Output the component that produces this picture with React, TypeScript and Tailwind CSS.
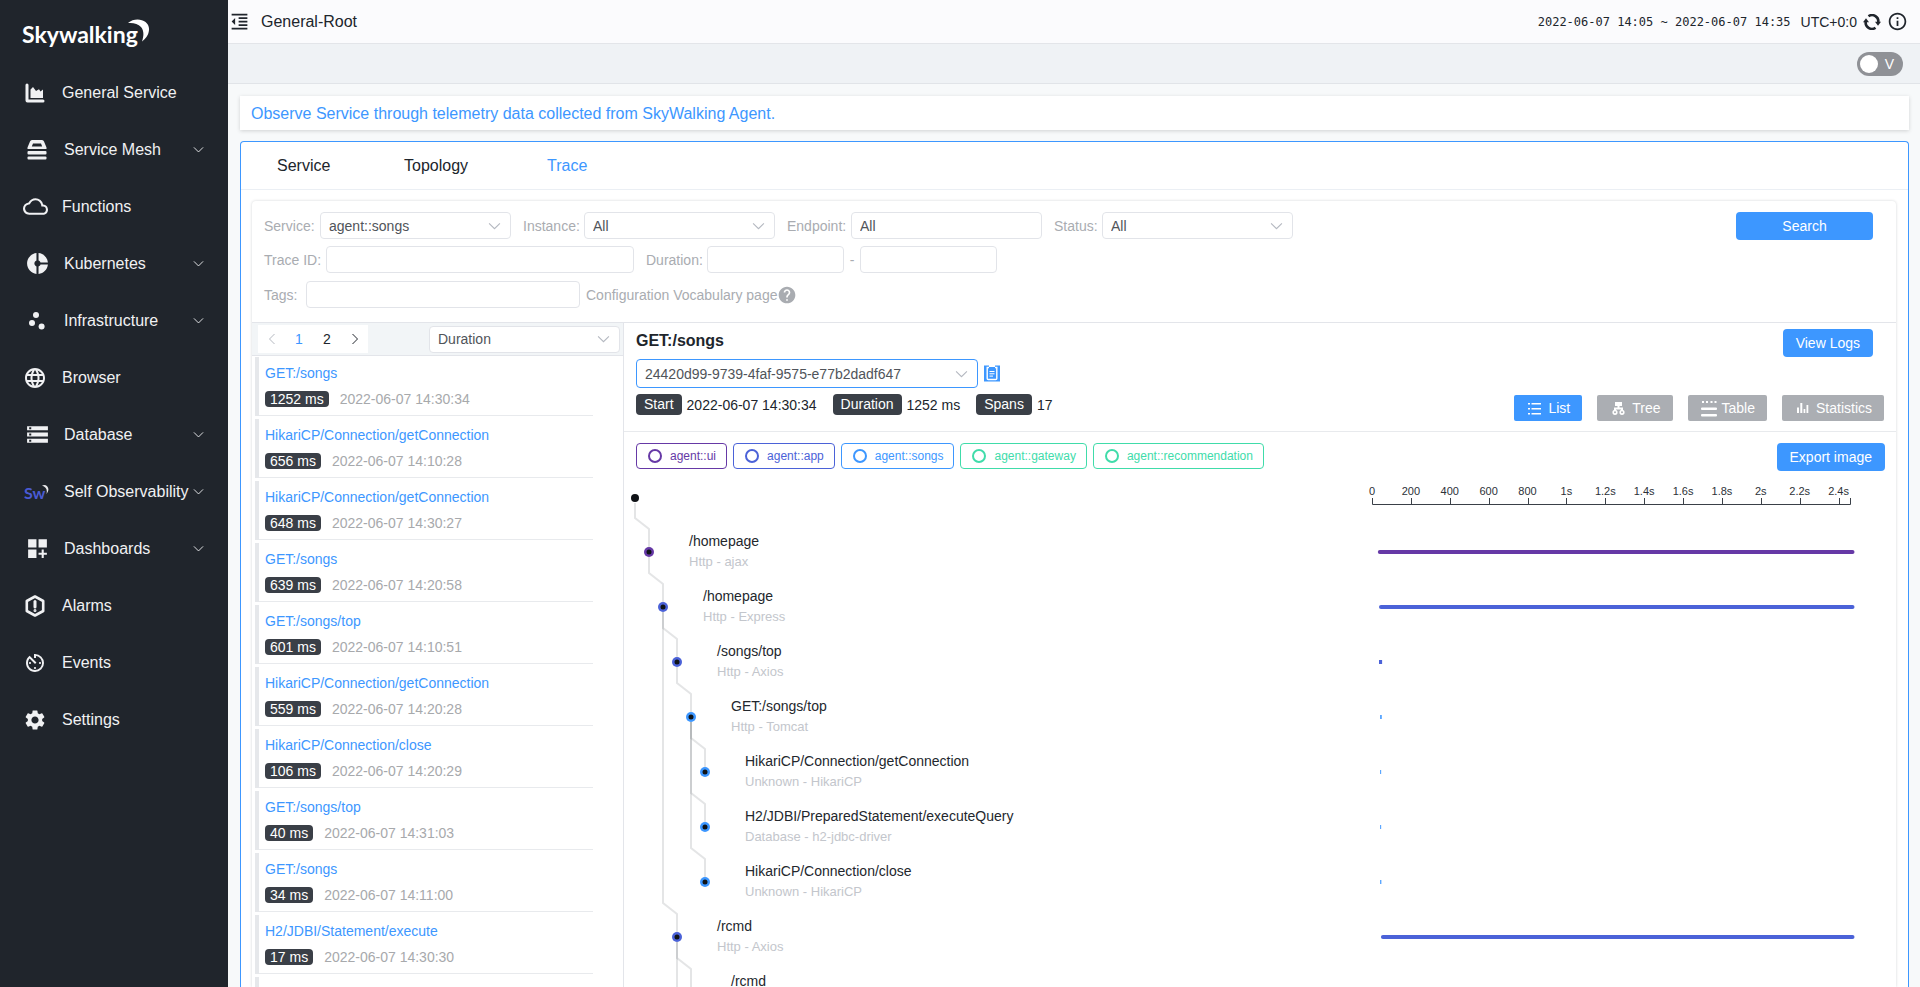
import React, { useState } from "react";
import clsx from "clsx";
import {
  MdAvTimer,
  MdDashboardCustomize,
  MdDonutSmall,
  MdFormatIndentDecrease,
  MdHelp,
  MdInfoOutline,
  MdLanguage,
  MdOutlineCloud,
  MdScatterPlot,
  MdSettings,
  MdStorage,
} from "react-icons/md";

type MenuItem = {
  label: string;
  icon: React.ReactNode;
  hasChildren?: boolean;
};

type Trace = { name: string; duration: number; start: string };

type Span = {
  name?: string;
  layer?: string;
  level: number;
  parent: number;
  color: string;
  from: number;
  to: number;
};

const PURPLE = "#6639a6";
const INDIGO = "#4b62d8";
const BLUE = "#3d97ff";
const GREEN = "#40dcaa";

const Chevron = ({ className }: { className?: string }) => (
  <svg viewBox="0 0 12 8" fill="none" stroke="currentColor" className={className}>
    <path d="M1 1.5 6 6.5 11 1.5" />
  </svg>
);

const ChartIcon = () => (
  <svg viewBox="0 0 20 20" width="20" height="20" fill="currentColor">
    <path d="M0.5 2a1.5 1.5 0 0 1 3 0v14.500H18a1.500 1.500 0 0 1 0 3H2.500a2 2 0 0 1-2-2z" />
    <path d="M5.500 15V6.500l2.500-2.500 3 4 3-1.800 1.500 2.300 2.500-2V15z" />
  </svg>
);

const MeshIcon = () => (
  <svg viewBox="0 0 20 20" width="20" height="20" fill="currentColor">
    <path
      fillRule="evenodd"
      d="M5 0h10q1.500 0 2 1.500l2.500 6V9H.5V7.500l2.500-6Q3.500 0 5 0zM6 3.500 4.800 6.500h10.400L14 3.500z"
    />
    <rect x="0.5" y="11" width="19" height="3.5" rx="1" />
    <rect x="0.5" y="16.5" width="19" height="3" rx="1" />
  </svg>
);

const AlarmIcon = () => (
  <svg viewBox="0 0 20 22" width="20" height="22" fill="none" stroke="currentColor">
    <path d="M10 1.5 18.2 6v10L10 20.5 1.8 16V6z" strokeWidth="2.6" strokeLinejoin="round" />
    <path d="M10 6.500v5.500" strokeWidth="3" strokeLinecap="round" />
    <circle cx="10" cy="15.600" r="0.600" strokeWidth="1.800" />
  </svg>
);

const SwIcon = () => (
  <svg viewBox="0 0 26 18" width="26" height="18">
    <text x="0" y="16" fontSize="16" fontFamily="Lato, sans-serif" fontWeight="700" fill="#4a5bd4">
      Sw
    </text>
    <path d="M18 2.600c4-2.600 9.400 2.600 4.400 8.400 1.400-4.200-.6-7.200-4.400-8.400z" fill="#e8e8ea" />
  </svg>
);

const ReloadIcon = () => (
  <svg viewBox="0 0 18 16" width="18" height="16" fill="none" stroke="currentColor">
    <path d="M5.500 2.300A6.200 6.200 0 0 1 15.200 8.500" strokeWidth="2.600" />
    <path d="M12.500 13.700A6.200 6.200 0 0 1 2.800 7.500" strokeWidth="2.600" />
    <path d="M12 7.800h6l-3 4zM0 8.200h6l-3-4z" fill="currentColor" stroke="none" />
  </svg>
);

const CopyIcon = () => (
  <svg viewBox="0 0 16 17" width="16" height="17">
    <rect y="0.500" width="16" height="16" fill={BLUE} />
    <path
      d="M5 2.500H3.200v11q0 1 1 1h7.600q1 0 1-1v-11H11"
      stroke="#fff"
      strokeWidth="1.400"
      fill="none"
    />
    <rect x="5" y="0" width="6" height="2" fill="#fff" />
    <path d="M5.500 6.500h5M5.500 8.800h5M5.500 11.100h3.500" stroke="#fff" />
  </svg>
);

const ListIcon = () => (
  <svg viewBox="0 0 13 13" width="13" height="13" fill="currentColor">
    <path d="M0 1h2v1.500H0zM3.500 1H13v1.500H3.500zM0 6h2v1.500H0zM3.500 6H13v1.500H3.500zM0 11h2v1.500H0zM3.500 11H13v1.500H3.500z" />
  </svg>
);

const TreeIcon = () => (
  <svg viewBox="0 0 13 13" width="13" height="13" fill="none" stroke="currentColor" strokeWidth="1.600">
    <path d="M3 2h7" strokeWidth="4" />
    <path d="M6.500 2v4M3 9V6.500h7V9" strokeWidth="2" />
    <circle cx="3" cy="10.300" r="1.800" />
    <circle cx="10" cy="10.300" r="1.800" />
  </svg>
);

const TableIcon = () => (
  <svg viewBox="0 0 16 17" width="16" height="17" fill="currentColor">
    <path d="M1 1h2v2H1zM5 1h2v2H5zM9.500 1h2v2h-2zM13.500 1h2v2h-2z" />
    <rect y="7.500" width="16" height="2.500" rx="1" />
    <rect y="14" width="16" height="2.500" rx="1" />
  </svg>
);

const StatisticsIcon = () => (
  <svg viewBox="0 0 12 12" width="12" height="12" fill="currentColor">
    <path d="M0 5.500h2V11H0zM3.300 1h2v10h-2zM6.600 7h1.700v4H6.600zM9.500 3h1.800v8H9.500z" />
  </svg>
);

const menus: MenuItem[] = [
  { label: "General Service", icon: <ChartIcon /> },
  { label: "Service Mesh", icon: <MeshIcon />, hasChildren: true },
  { label: "Functions", icon: <MdOutlineCloud size={25} /> },
  { label: "Kubernetes", icon: <MdDonutSmall size={25} />, hasChildren: true },
  { label: "Infrastructure", icon: <MdScatterPlot size={24} />, hasChildren: true },
  { label: "Browser", icon: <MdLanguage size={24} /> },
  { label: "Database", icon: <MdStorage size={25} />, hasChildren: true },
  { label: "Self Observability", icon: <SwIcon />, hasChildren: true },
  { label: "Dashboards", icon: <MdDashboardCustomize size={25} />, hasChildren: true },
  { label: "Alarms", icon: <AlarmIcon /> },
  { label: "Events", icon: <MdAvTimer size={24} /> },
  { label: "Settings", icon: <MdSettings size={24} /> },
];

const traces: Trace[] = [
  { name: "GET:/songs", duration: 1252, start: "2022-06-07 14:30:34" },
  { name: "HikariCP/Connection/getConnection", duration: 656, start: "2022-06-07 14:10:28" },
  { name: "HikariCP/Connection/getConnection", duration: 648, start: "2022-06-07 14:30:27" },
  { name: "GET:/songs", duration: 639, start: "2022-06-07 14:20:58" },
  { name: "GET:/songs/top", duration: 601, start: "2022-06-07 14:10:51" },
  { name: "HikariCP/Connection/getConnection", duration: 559, start: "2022-06-07 14:20:28" },
  { name: "HikariCP/Connection/close", duration: 106, start: "2022-06-07 14:20:29" },
  { name: "GET:/songs/top", duration: 40, start: "2022-06-07 14:31:03" },
  { name: "GET:/songs", duration: 34, start: "2022-06-07 14:11:00" },
  { name: "H2/JDBI/Statement/execute", duration: 17, start: "2022-06-07 14:30:30" },
];

const spans: Span[] = [
  { name: "/homepage", layer: "Http - ajax", level: 1, parent: -1, color: PURPLE, from: 30, to: 2482 },
  { name: "/homepage", layer: "Http - Express", level: 2, parent: 0, color: INDIGO, from: 36, to: 2482 },
  { name: "/songs/top", layer: "Http - Axios", level: 3, parent: 1, color: INDIGO, from: 36, to: 52 },
  { name: "GET:/songs/top", layer: "Http - Tomcat", level: 4, parent: 2, color: BLUE, from: 42, to: 50 },
  { name: "HikariCP/Connection/getConnection", layer: "Unknown - HikariCP", level: 5, parent: 3, color: BLUE, from: 42, to: 47 },
  { name: "H2/JDBI/PreparedStatement/executeQuery", layer: "Database - h2-jdbc-driver", level: 5, parent: 3, color: BLUE, from: 42, to: 47 },
  { name: "HikariCP/Connection/close", layer: "Unknown - HikariCP", level: 5, parent: 3, color: BLUE, from: 42, to: 48 },
  { name: "/rcmd", layer: "Http - Axios", level: 3, parent: 1, color: INDIGO, from: 46, to: 2482 },
  { name: "/rcmd", level: 4, parent: 7, color: GREEN, from: 50, to: 2482 },
  { level: 4, parent: 7, color: GREEN, from: 52, to: 2482 },
];

const services = [
  { name: "agent::ui", style: "border-[#6639a6] text-[#6639a6]" },
  { name: "agent::app", style: "border-[#4b62d8] text-[#4b62d8]" },
  { name: "agent::songs", style: "border-[#3d97ff] text-[#3d97ff]" },
  { name: "agent::gateway", style: "border-[#40dcaa] text-[#40dcaa]" },
  { name: "agent::recommendation", style: "border-[#40dcaa] text-[#40dcaa]" },
];

const views = [
  { name: "List", icon: <ListIcon />, style: "gap-[7px] pl-[14px]" },
  { name: "Tree", icon: <TreeIcon />, style: "gap-[7px] pl-[15px]" },
  { name: "Table", icon: <TableIcon />, style: "gap-[5px] pl-[13px]" },
  { name: "Statistics", icon: <StatisticsIcon />, style: "gap-[7px] pl-[15px]" },
];

const Logo = () => (
  <svg viewBox="0 0 130 34" width="130" height="34" role="img" aria-label="Skywalking">
    <text x="0" y="26" fontSize="23" fontWeight="700" fontFamily="Lato, sans-serif" fill="#fff">
      Skywalking
    </text>
    <path d="M106 6C114-1 128 3 127 13c-.5 6-4 9-7 11.500 2-6 2-11-1-14.500C116 6.500 111 5.500 106 6z" fill="#fff" />
  </svg>
);

const Sidebar = () => (
  <aside className="flex w-[228px] shrink-0 flex-col bg-[#20252c] text-[#f0f1f3]">
    <div className="flex h-16 shrink-0 items-center pt-[3px] pl-[22px]">
      <Logo />
    </div>
    <nav>
      {menus.map((menu) => (
        <a
          key={menu.label}
          href="#"
          className={clsx(
            "flex h-[57px] items-center pr-6 whitespace-nowrap",
            menu.hasChildren ? "pl-6" : "pl-[22px]",
          )}
        >
          <span className="mr-[14px] flex w-[26px] shrink-0 justify-center">{menu.icon}</span>
          <span className="flex-1">{menu.label}</span>
          {menu.hasChildren && <Chevron className="w-[11px]" />}
        </a>
      ))}
    </nav>
  </aside>
);

const Header = () => (
  <header className="flex h-11 shrink-0 items-center justify-between border-b border-[#e3e5e9] bg-[#fbfbfd] pr-3 pl-[1px]">
    <div className="flex items-center gap-[11px]">
      <button aria-label="Collapse menu">
        <MdFormatIndentDecrease size={21} />
      </button>
      <h1>General-Root</h1>
    </div>
    <div className="flex items-center text-sm">
      <time className="mr-[10px] font-['DejaVu_Sans_Mono',monospace] text-xs">
        2022-06-07 14:05 ~ 2022-06-07 14:35
      </time>
      <span className="mr-[6px]">UTC+0:0</span>
      <button aria-label="Reload" className="mr-[6px]">
        <ReloadIcon />
      </button>
      <button aria-label="Info">
        <MdInfoOutline size={21} />
      </button>
    </div>
  </header>
);

const Select = ({
  id,
  options,
  className,
}: {
  id: string;
  options: string[];
  className?: string;
}) => (
  <div
    className={clsx(
      "relative rounded border bg-white text-[#50545a]",
      className,
    )}
  >
    <select id={id} aria-label={id} className="h-full w-full appearance-none pr-8 pl-2 outline-none">
      {options.map((option) => (
        <option key={option}>{option}</option>
      ))}
    </select>
    <Chevron className="pointer-events-none absolute top-1/2 right-[9px] w-[13px] -translate-y-1/2 text-[#b4b8c0]" />
  </div>
);

const inputStyle = "h-[27px] rounded border border-[#e2e4e9] bg-white px-2 text-[#50545a] outline-none";
const selectStyle = "h-[27px] w-[191px] border-[#e2e4e9]";

const Filters = () => (
  <form className="flex justify-between border-b border-[#e3e5ea] pt-[11px] pr-[23px] pb-[14px] pl-3 text-sm text-[#a9acb1]">
    <div>
      <div className="flex items-center">
        <label htmlFor="service" className="w-[56px]">Service:</label>
        <Select id="service" options={["agent::songs"]} className={selectStyle} />
        <label htmlFor="instance" className="ml-3 w-[61px]">Instance:</label>
        <Select id="instance" options={["All"]} className={selectStyle} />
        <label htmlFor="endpoint" className="ml-3 w-[64px]">Endpoint:</label>
        <input id="endpoint" defaultValue="All" className={clsx(inputStyle, "w-[191px]")} />
        <label htmlFor="status" className="ml-3 w-[48px]">Status:</label>
        <Select id="status" options={["All"]} className={selectStyle} />
      </div>
      <div className="mt-[7px] flex items-center">
        <label htmlFor="trace-id" className="w-[62px]">Trace ID:</label>
        <input id="trace-id" className={clsx(inputStyle, "w-[308px]")} />
        <label htmlFor="min-duration" className="ml-3 w-[61px]">Duration:</label>
        <input id="min-duration" className={clsx(inputStyle, "w-[137px]")} />
        <span className="w-4 text-center">-</span>
        <input aria-label="Max duration" className={clsx(inputStyle, "w-[137px]")} />
      </div>
      <div className="mt-2 flex items-center">
        <label htmlFor="tags" className="w-[42px]">Tags:</label>
        <input id="tags" className={clsx(inputStyle, "w-[274px]")} />
        <a href="#" className="ml-[6px] flex items-center">
          Configuration Vocabulary page
          <MdHelp size={20} />
        </a>
      </div>
    </div>
    <button type="button" className="h-7 w-[137px] rounded bg-[#3d97ff] text-white">
      Search
    </button>
  </form>
);

const TraceList = () => (
  <section className="w-[371px] shrink-0 text-sm">
    <div className="flex h-[33px] items-center justify-between border-b border-[#e3e5ea] bg-[#f2f5f7] pr-[3px] pl-[6px]">
      <div className="flex h-7 items-center bg-white font-medium">
        <button aria-label="Previous page" className="flex w-[27px] justify-center text-[#b4b8c0]">
          <Chevron className="w-3 rotate-90" />
        </button>
        <button className="w-[28px] text-[#3d97ff]">1</button>
        <button className="w-[28px]">2</button>
        <button aria-label="Next page" className="flex w-[27px] justify-center">
          <Chevron className="w-3 -rotate-90" />
        </button>
      </div>
      <Select id="order" options={["Duration"]} className={selectStyle} />
    </div>
    <ul className="pt-px pl-[3px]">
      {traces.map((trace, index) => (
        <li key={index} className="mb-[3px] flex h-[59px] w-[338px]">
          <span className="w-1 shrink-0 bg-[#e6e8eb]" />
          <div className="flex-1 border-b border-[#e8eaed] pt-[6px] pl-[6px]">
            <a href="#" className="block text-[#3d97ff]">{trace.name}</a>
            <div className="mt-2 flex items-center gap-[11px] leading-4">
              <span className="rounded bg-[#3a3f47] px-[5px] text-white">{trace.duration} ms</span>
              <span className="text-[#a7a9ac]">{trace.start}</span>
            </div>
          </div>
        </li>
      ))}
      <li className="flex h-[59px] w-[338px]">
        <span className="w-1 shrink-0 bg-[#e6e8eb]" />
      </li>
    </ul>
  </section>
);

const Tag = ({ label, value }: { label: string; value: string }) => (
  <div className="flex items-center gap-[5px]">
    <span className="rounded bg-[#3a3f47] px-2 leading-[21px] text-white">{label}</span>
    <span>{value}</span>
  </div>
);

const nodeX = (level: number) => 11 + level * 14;
const nodeY = (index: number) => 81 + index * 55;

const SpanTree = () => (
  <svg className="h-[516px] min-w-0 flex-1" fontFamily="Liberation Sans, Arial, sans-serif">
    {spans.map((span, index) => {
      const x = nodeX(span.level);
      const y = nodeY(index);
      const parentX = nodeX(span.level - 1);
      const parentY = span.parent < 0 ? 27 : nodeY(span.parent);
      return (
        <path
          key={index}
          d={`M${parentX} ${parentY + 5}V${y - 34}L${x} ${y - 23}V${y - 5}`}
          fill="none"
          stroke="#202830"
          strokeOpacity="0.12"
          strokeWidth="2"
        />
      );
    })}
    <circle cx={nodeX(0)} cy="27" r="4" fill="#0f1216" />
    {spans.map((span, index) => {
      const x = nodeX(span.level);
      const y = nodeY(index);
      return (
        <g key={index}>
          <circle cx={x} cy={y} r="5" fill={span.color} />
          <circle cx={x} cy={y} r="2.500" fill="#101418" />
          {span.name && (
            <text x={x + 40} y={y - 6} fontSize="14" fill="#23272d">{span.name}</text>
          )}
          {span.layer && (
            <text x={x + 40} y={y + 14} fontSize="13" fill="#c3c6cc">{span.layer}</text>
          )}
        </g>
      );
    })}
  </svg>
);

const ticks = ["0", "200", "400", "600", "800", "1s", "1.2s", "1.4s", "1.6s", "1.8s", "2s", "2.2s", "2.4s"];
const timeX = (ms: number) => 12 + ms * 0.1944;

const Timeline = () => (
  <svg className="h-[516px] w-[536px] shrink-0" fontFamily="Liberation Sans, Arial, sans-serif">
    <path d="M12.500 27V33.500H490.500V27" fill="none" stroke="#3a4048" />
    {ticks.map((tick, index) => (
      <g key={tick}>
        <path d={`M${Math.round(timeX(index * 200))}.5 27v6`} stroke="#3a4048" />
        <text x={timeX(index * 200)} y="24" fontSize="11" textAnchor="middle" fill="#2c3138">
          {tick}
        </text>
      </g>
    ))}
    {spans.map((span, index) => (
      <rect
        key={index}
        x={timeX(span.from)}
        y={nodeY(index) - 2}
        width={(span.to - span.from) * 0.1944}
        height="4"
        rx={span.to - span.from > 20 ? 2 : 0}
        fill={span.color}
      />
    ))}
  </svg>
);

const TraceDetail = () => {
  const [view, setView] = useState("List");

  return (
    <section className="min-w-0 flex-1 border-l border-[#e3e5ea] text-sm">
      <div className="flex justify-between border-b border-[#e8eaed] pr-3 pl-3">
        <div className="pt-2 pb-4">
          <h2 className="text-base leading-5 font-bold">GET:/songs</h2>
          <div className="mt-2 flex items-center gap-[6px]">
            <Select
              id="trace"
              options={["24420d99-9739-4faf-9575-e77b2dadf647"]}
              className="h-[29px] w-[342px] border-[#3d97ff]"
            />
            <button aria-label="Copy trace ID">
              <CopyIcon />
            </button>
          </div>
          <div className="mt-[6px] flex gap-4">
            <Tag label="Start" value="2022-06-07 14:30:34" />
            <Tag label="Duration" value="1252 ms" />
            <Tag label="Spans" value="17" />
          </div>
        </div>
        <div className="flex flex-col items-end justify-between pt-[6px] pb-[10px]">
          <button className="mr-[11px] h-7 rounded bg-[#3d97ff] px-[13px] text-white">View Logs</button>
          <div className="flex gap-[15px]">
            {views.map(({ name, icon, style }) => (
              <button
                key={name}
                onClick={() => setView(name)}
                className={clsx(
                  "flex h-[26px] items-center rounded-xs pr-3 text-white",
                  style,
                  view === name ? "bg-[#3d97ff]" : "bg-[#abaeb3]",
                )}
              >
                {icon}
                {name}
              </button>
            ))}
          </div>
        </div>
      </div>
      <div className="flex justify-between pt-[11px] pr-[11px] pl-3">
        <div className="flex gap-[6px]">
          {services.map((service) => (
            <span
              key={service.name}
              className={clsx(
                "flex h-[26px] items-center gap-2 rounded border pr-[10px] pl-[11px] text-xs",
                service.style,
              )}
            >
              <span className="h-[14px] w-[14px] rounded-full border-2 border-current" />
              {service.name}
            </span>
          ))}
        </div>
        <button className="h-7 rounded bg-[#3d97ff] px-[13px] text-white">Export image</button>
      </div>
      <div className="flex">
        <SpanTree />
        <Timeline />
      </div>
    </section>
  );
};

const App = () => {
  const [tab, setTab] = useState("Trace");

  return (
    <div className="flex h-screen overflow-hidden bg-[#f7f9fa] font-['Liberation_Sans',Arial,sans-serif] text-base text-[#20252c]">
      <Sidebar />
      <main className="flex min-w-0 flex-1 flex-col">
        <Header />
        <div className="flex h-10 shrink-0 items-center justify-end border-b border-[#e1e4e8] bg-[#eff2f5] pr-[17px]">
          <button
            role="switch"
            aria-checked="false"
            aria-label="View mode"
            className="flex h-6 w-[46px] items-center justify-between rounded-full bg-[#8f9196] pr-[9px] pl-[3px] text-sm text-white"
          >
            <span className="h-[18px] w-[18px] rounded-full bg-white" />V
          </button>
        </div>
        <div className="mt-3 mr-[11px] ml-3 flex h-[34px] shrink-0 items-center bg-white pt-[2px] pl-[11px] text-[#3d97ff] shadow-[0_1px_4px_rgba(0,0,0,0.16)]">
          Observe Service through telemetry data collected from SkyWalking Agent.
        </div>
        <div className="mt-[11px] mr-[11px] ml-3 flex min-h-0 flex-1 flex-col rounded-t border border-b-0 border-[#3d97ff] bg-white">
          <div role="tablist" className="flex h-12 shrink-0 items-center border-b border-[#ebeff4] pt-px pl-9 text-left">
            {[
              { name: "Service", width: "w-[127px]" },
              { name: "Topology", width: "w-[143px]" },
              { name: "Trace", width: "w-[80px]" },
            ].map(({ name, width }) => (
              <button
                key={name}
                role="tab"
                aria-selected={tab === name}
                onClick={() => setTab(name)}
                className={clsx("text-left", width, tab === name && "text-[#3d97ff]")}
              >
                {name}
              </button>
            ))}
          </div>
          <div className="mt-[11px] mr-3 ml-[11px] flex min-h-0 flex-1 flex-col overflow-hidden rounded-t shadow-[0_0_3px_rgba(0,20,40,0.18)]">
            <Filters />
            <div className="flex min-h-0 flex-1">
              <TraceList />
              <TraceDetail />
            </div>
          </div>
        </div>
      </main>
    </div>
  );
};

export default App;
